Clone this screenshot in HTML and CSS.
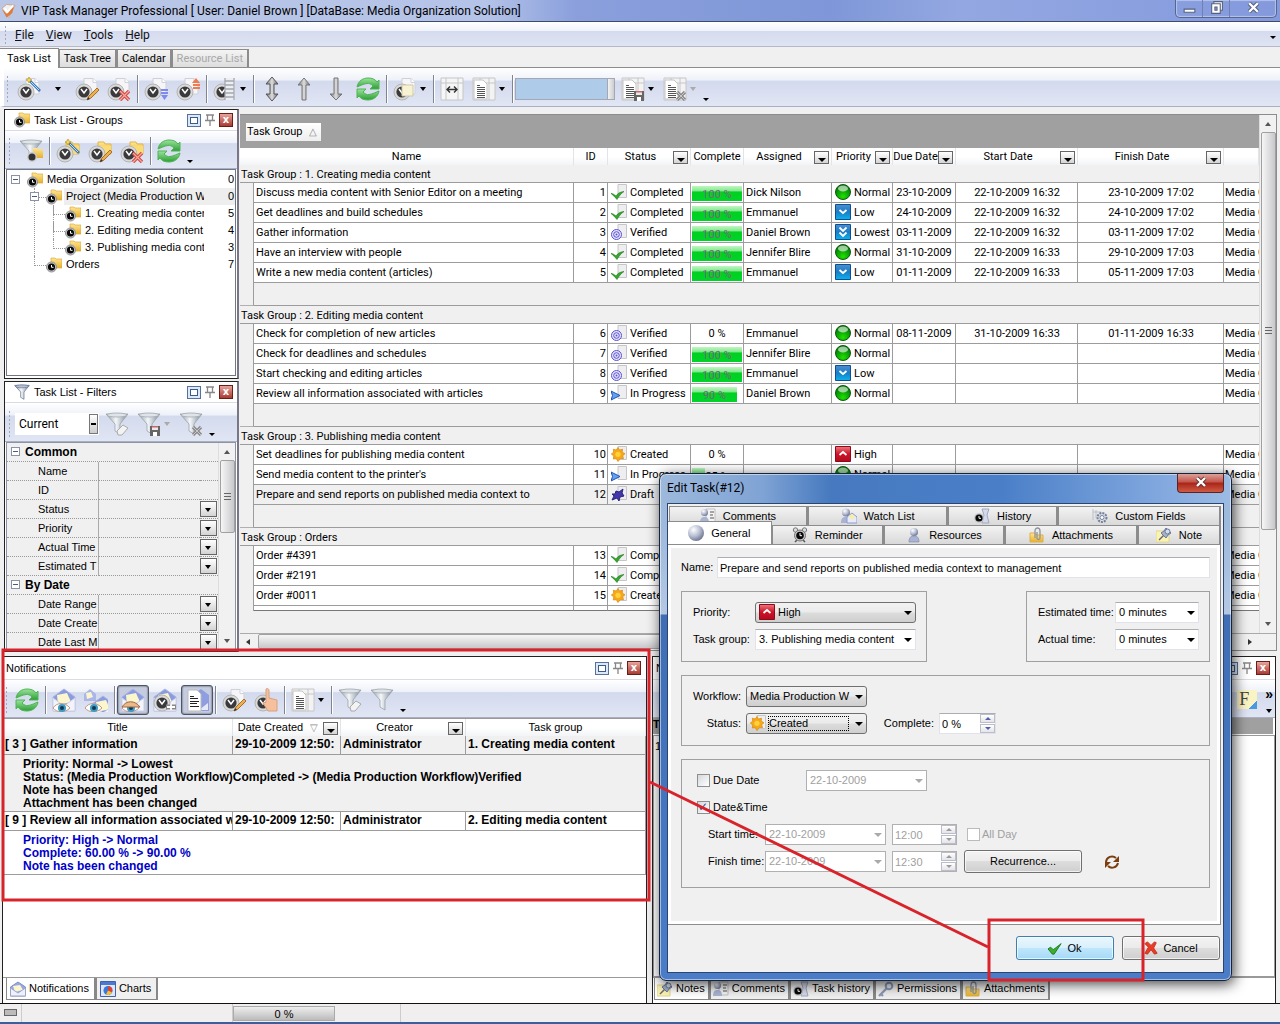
FILE: index.html
```html
<!DOCTYPE html>
<html lang="en">
<head>
<meta charset="utf-8">
<title>VIP Task Manager Professional</title>
<link rel="stylesheet" href="styles.css">
</head>
<body>
<svg class="defs" aria-hidden="true">
  <defs>
    <linearGradient id="g-green" x1="0" y1="0" x2="0" y2="1"><stop offset="0" stop-color="#9be49b"/><stop offset="1" stop-color="#2c9e34"/></linearGradient>
    <linearGradient id="g-steel" x1="0" y1="0" x2="1" y2="0"><stop offset="0" stop-color="#777"/><stop offset=".5" stop-color="#ddd"/><stop offset="1" stop-color="#666"/></linearGradient>
    <linearGradient id="g-yel" x1="0" y1="0" x2="0" y2="1"><stop offset="0" stop-color="#ffe694"/><stop offset="1" stop-color="#e6b02c"/></linearGradient>
    <linearGradient id="g-fun" x1="0" y1="0" x2="1" y2="0"><stop offset="0" stop-color="#8d98a2"/><stop offset=".45" stop-color="#f4f7fa"/><stop offset="1" stop-color="#7c8994"/></linearGradient>
    <linearGradient id="g-blue" x1="0" y1="0" x2="0" y2="1"><stop offset="0" stop-color="#4c8fd0"/><stop offset=".5" stop-color="#1c7cc4"/><stop offset="1" stop-color="#08b4ee"/></linearGradient>
    <linearGradient id="g-red" x1="0" y1="0" x2="0" y2="1"><stop offset="0" stop-color="#ee7a80"/><stop offset=".5" stop-color="#cc1428"/><stop offset="1" stop-color="#b40c20"/></linearGradient>
    <radialGradient id="g-ball" cx=".5" cy=".8" r=".8"><stop offset="0" stop-color="#20e000"/><stop offset=".6" stop-color="#079a07"/><stop offset="1" stop-color="#05600a"/></radialGradient>
    <radialGradient id="g-pearl" cx=".35" cy=".3" r=".8"><stop offset="0" stop-color="#fff"/><stop offset=".5" stop-color="#b8bfd4"/><stop offset="1" stop-color="#5f6780"/></radialGradient>
  </defs>
  <symbol id="ck" viewBox="0 0 24 24"><circle cx="9" cy="15" r="8" fill="#d9d9d9" stroke="#b4b4b4"/><circle cx="9" cy="15" r="5.600" fill="#3a3a3c"/><path d="M6 12l3 4 3-4" fill="none" stroke="#fff" stroke-width="1.500"/></symbol>
  <symbol id="pg" viewBox="0 0 24 24"><path d="M9 1.500h9l4 4V17H9z" fill="#f6f6f8" stroke="#cfd1d8"/><path d="M18 1.500v4h4" fill="#fff" stroke="#cfd1d8"/></symbol>
  <symbol id="fd" viewBox="0 0 24 24"><path d="M10 3h6l1 2h6v10H10z" fill="url(#g-yel)" stroke="#e0b648"/><path d="M12 7h11v8H12z" fill="#fbdc74"/></symbol>
  <symbol id="wand" viewBox="0 0 24 24"><path d="M13 4l10 10" stroke="#3f78bd" stroke-width="2.600"/><path d="M14 5l8 8" stroke="#b8dcf8" stroke-width="1"/><path d="M12 0l1 2 2 1-2 1-1 2-1-2-2-1 2-1z" fill="#f7d94c" stroke="#a88a20" stroke-width=".6"/></symbol>
  <symbol id="pencil" viewBox="0 0 24 24"><path d="M12 23l2-4 8-8 2 2-8 8z" fill="#eeb04c" stroke="#a8702c"/><path d="M12 23l1-3 2 2z" fill="#333"/></symbol>
  <symbol id="redx" viewBox="0 0 24 24"><path d="M13 14l9 9M22 14l-9 9" stroke="#d04a44" stroke-width="3.400"/><path d="M13 14l9 9M22 14l-9 9" stroke="#f9a89c" stroke-width="1.200"/></symbol>
  <symbol id="grayx" viewBox="0 0 24 24"><path d="M14 15l8 8M22 15l-8 8" stroke="#8c8c8c" stroke-width="3.200"/><path d="M14 15l8 8M22 15l-8 8" stroke="#c6c6c6" stroke-width="1"/></symbol>
  <symbol id="floppy" viewBox="0 0 24 24"><path d="M13 14h10v10H13z" fill="#666"/><path d="M15 14h6v4h-6z" fill="#e9e9e9"/><path d="M16 20h4v4h-4z" fill="#fff"/><path d="M15 14h6v1.500h-6z" fill="#c66"/></symbol>
  <symbol id="refresh" viewBox="0 0 24 24"><path d="M1 10C2 4 7 1 12 1c4 0 7 1 9 4l2-2v9h-9l3-3c-2-2-4-3-6-2.500C7 7 4 9 1 10z" fill="url(#g-green)" stroke="#4fb456"/><path d="M23 14c-1 6-6 9-11 9-4 0-7-1-9-4l-2 2v-9h9l-3 3c2 2 4 3 6 2.500 4-.5 7-2.500 10-3.500z" fill="url(#g-green)" stroke="#4fb456"/></symbol>
  <symbol id="funnel" viewBox="0 0 24 24"><path d="M1 2h22l-8 10v10l-5-3v-7z" fill="url(#g-fun)" stroke="#9aa3ab" stroke-width=".8"/><ellipse cx="12" cy="3" rx="10" ry="2" fill="#dfe4e8" stroke="#a1a9b0" stroke-width=".8"/></symbol>
  <symbol id="funnelb" viewBox="0 0 24 24"><path d="M1 2h22l-8 10v11l-5-3v-8z" fill="url(#g-fun)" stroke="#5d6c86"/><ellipse cx="12" cy="3.500" rx="10" ry="2.200" fill="#b4bfd4" stroke="#62708a"/></symbol>
  <symbol id="cols" viewBox="0 0 24 24"><path d="M1 1h22v22H1z" fill="#f3f3f3" stroke="#c6c6c6"/><path d="M1 6h22M8 1v5M17 1v22" stroke="#c6c6c6"/><path d="M2 3h9l4 4v15H2z" fill="#fff" stroke="#c4c4c4"/><path d="M5 8.500h3m-3 2h8m-8 2h8m-8 2h8m-8 2h8m-8 2h8m-8 2h8" stroke="#555"/></symbol>
  <symbol id="env" viewBox="0 0 24 24"><path d="M1 9l11-8 11 8v14H1z" fill="#8b9be0" stroke="#aab4e4"/><path d="M5 7l10-2 4 9-13 3z" fill="#fbf6cc"/><path d="M1 10l11 8 11-8v13H1z" fill="#f2f4fa" stroke="#cdd2e4"/></symbol>
  <symbol id="eye" viewBox="0 0 24 24"><path d="M1 20c4-6 12-6 17 0-5 5-13 5-17 0z" fill="#fff" stroke="#c49a84"/><circle cx="10" cy="20" r="4" fill="#3d9bc4"/><circle cx="10" cy="20" r="2" fill="#15384e"/></symbol>
  <symbol id="fclock" viewBox="0 0 16 16"><path d="M5 1h4l1 1h6v9H5z" fill="url(#g-yel)" stroke="#dba93a" stroke-width=".7"/><circle cx="5.500" cy="10" r="5" fill="#c4c4c8" stroke="#909094"/><circle cx="5.500" cy="10" r="3.600" fill="#080808"/><path d="M5.500 8v2.300h2" stroke="#fff" fill="none"/></symbol>
  <symbol id="sheet" viewBox="0 0 16 16"><path d="M7 .5h8.500v13H7z" fill="#eeeef0" stroke="#c6c6c8"/></symbol>
  <symbol id="s-done" viewBox="0 0 16 16"><use href="#sheet"/><path d="M0 9.500c2 0 3 1 5 2.500 2-3 4-4 8-4.500-3 2-5 4.500-7 8C4 13 2 11 0 9.500z" fill="#35a62e" stroke="#1e7a1b" stroke-width=".6"/></symbol>
  <symbol id="s-ver" viewBox="0 0 16 16"><use href="#sheet"/><circle cx="5.500" cy="10.500" r="5" fill="#e7e5ff" stroke="#5a50d0"/><circle cx="5.500" cy="10.500" r="2.800" fill="none" stroke="#5a50d0"/><circle cx="5.500" cy="10.500" r="1" fill="#5a50d0"/></symbol>
  <symbol id="s-prog" viewBox="0 0 16 16"><use href="#sheet"/><path d="M0 6l9 4.500L0 15l1.500-4.500z" fill="#5fa4ee" stroke="#2350b4"/></symbol>
  <symbol id="s-new" viewBox="0 0 16 16"><use href="#sheet"/><path d="M7 1.500l1.500 2.600 3-.9-.3 3 2.800 1.500-2.300 2 .8 3-3-.2L7 15.500l-1.700-2.800-3 .3.500-3L.3 8l2.400-1.800-.4-3 3 .8z" fill="#f7a818" stroke="#d98708" stroke-width=".7"/><circle cx="7" cy="8.300" r="2.600" fill="#ffd23c"/></symbol>
  <symbol id="s-draft" viewBox="0 0 16 16"><use href="#sheet"/><path d="M5 5l3 1 4-3-1 4 2 3-4 1-1 4-2-3-5 2 2-4-2-2 3 0z" fill="#4236a8" stroke="#2b2380"/></symbol>
  <symbol id="p-norm" viewBox="0 0 16 16"><circle cx="8" cy="8" r="7.500" fill="url(#g-ball)" stroke="#0a5c0c"/><ellipse cx="8" cy="4.500" rx="5" ry="3" fill="#fff" opacity=".6"/></symbol>
  <symbol id="p-low" viewBox="0 0 16 16"><path d="M.5.5h15v15H.5z" fill="url(#g-blue)" stroke="#0d4f92"/><path d="M4.500 6L8 9l3.500-3" fill="none" stroke="#fff" stroke-width="1.800"/></symbol>
  <symbol id="p-lowest" viewBox="0 0 16 16"><path d="M.5.5h15v15H.5z" fill="url(#g-blue)" stroke="#0d4f92"/><path d="M4.500 3.500L8 7l3.500-3.500M4.500 8.500L8 12l3.500-3.500" fill="none" stroke="#fff" stroke-width="1.800"/></symbol>
  <symbol id="p-high" viewBox="0 0 16 16"><path d="M.5.5h15v15H.5z" fill="url(#g-red)" stroke="#8e0a18"/><path d="M4.500 9L8 6l3.500 3" fill="none" stroke="#fff" stroke-width="1.800"/></symbol>
  <symbol id="person" viewBox="0 0 16 16"><path d="M3 15c0-5 2-6 5-6s5 1 5 6z" fill="#a9b4d2" stroke="#7c88ac" stroke-width=".6"/><circle cx="8" cy="5" r="4" fill="url(#g-pearl)"/></symbol>
  <symbol id="t-comm" viewBox="0 0 16 16"><path d="M6 1h9v13H6z" fill="#f4f4f6" stroke="#c0c0c4"/><path d="M10 4h4m-4 3h3m-3 3h4" stroke="#555"/><path d="M0 15c0-5 2-6 4.500-6S9 10 9 15z" fill="#a9b4d2"/><circle cx="4.500" cy="4.500" r="3.500" fill="url(#g-pearl)"/></symbol>
  <symbol id="t-watch" viewBox="0 0 16 16"><path d="M0 15c0-5 2-6 4.500-6S9 10 9 15z" fill="#a9b4d2"/><circle cx="5" cy="4.500" r="4" fill="url(#g-pearl)"/><path d="M6 9l5-4 5 4v6H6z" fill="#e6eafa" stroke="#8d9ad0"/><path d="M8 8l3-2 3 3-3 3z" fill="#f8ee9c"/></symbol>
  <symbol id="t-hist" viewBox="0 0 16 16"><path d="M8 1h7l-2 6 2 8H8l2-8z" fill="#d5daea" stroke="#a0a8c0"/><circle cx="5" cy="10" r="4.800" fill="#c4c4c8"/><circle cx="5" cy="10" r="3.600" fill="#080808"/><path d="M5 8v2.300h2" stroke="#fff" fill="none"/></symbol>
  <symbol id="gear" viewBox="0 0 16 16"><path d="M1 1v11M4 2v8M1 4h8" stroke="#b8c0c8" fill="none"/><circle cx="10" cy="9.500" r="4.500" fill="#d8dee8" stroke="#76809a" stroke-width="2" stroke-dasharray="2 1"/><circle cx="10" cy="9.500" r="2" fill="#fff" stroke="#76809a"/></symbol>
  <symbol id="alarm" viewBox="0 0 16 16"><circle cx="3.500" cy="3" r="2.200" fill="#ddd" stroke="#777"/><circle cx="12.500" cy="3" r="2.200" fill="#ddd" stroke="#777"/><path d="M3 15l2-2m8 2l-2-2" stroke="#555" stroke-width="1.500"/><circle cx="8" cy="8.500" r="5.500" fill="#c8c8c8" stroke="#777"/><circle cx="8" cy="8.500" r="3.800" fill="#0a0a0a"/><path d="M8 6v2.700h2" stroke="#fff" fill="none"/></symbol>
  <symbol id="clip" viewBox="0 0 16 16"><path d="M1 6h5l1 2h7v7H1z" fill="url(#g-yel)" stroke="#e0b048"/><path d="M6 11V4c0-4 5-4 5 0v7c0 2-3 2-3 0V5" fill="none" stroke="#8f959c" stroke-width="1.300"/></symbol>
  <symbol id="pin" viewBox="0 0 16 16"><path d="M0 4h13v11H0z" fill="#fbf3b4" stroke="#e0d68c"/><path d="M3 13l5-5" stroke="#667" stroke-width="1.400"/><path d="M5 6l5 5 2-3 3-2-5-5-2 3z" fill="#a3b1ca" stroke="#6a7a9c"/><circle cx="11.500" cy="4.500" r="2.500" fill="#d2dcec" stroke="#6a7a9c"/></symbol>
  <symbol id="key" viewBox="0 0 16 16"><path d="M1 15l8-8M3 13l2 2" stroke="#8c9ab4" stroke-width="2.400"/><circle cx="11" cy="5" r="3.300" fill="#e6ecf6" stroke="#8c9ab4" stroke-width="2"/></symbol>
  <symbol id="chart" viewBox="0 0 16 16"><path d="M.5.5h15v15H.5z" fill="#dfe6f6" stroke="#3d63b0"/><path d="M1 1h14v3H1z" fill="#4b7ad0"/><circle cx="8" cy="9.500" r="4.500" fill="#3b78d8"/><path d="M8 9.500V5a4.500 4.500 0 0 1 4 6.500z" fill="#e04030"/><path d="M8 9.500l4 2a4.500 4.500 0 0 1-6 2z" fill="#f2c230"/></symbol>
  <symbol id="envs" viewBox="0 0 16 16"><path d="M.5 6L8 1l7.500 5v9H.5z" fill="#9aa8e2" stroke="#7f8cc8"/><path d="M3 5l7-1 3 5-8 2z" fill="#fbf6cc"/><path d="M.5 7L8 12l7.500-5v8H.5z" fill="#eef1fa" stroke="#9ca6cc"/></symbol>
  <symbol id="pushpin" viewBox="0 0 12 12"><path d="M2 1h8M3.500 1v5M8.500 1v5M1 6.500h10M6 7v5" stroke="#888" fill="none" stroke-width="1.300"/></symbol>
  <symbol id="lad" viewBox="0 0 24 24"><path d="M12 1v22M21 1v22M12 4h9m-9 4h9m-9 4h9m-9 4h9m-9 4h9" stroke="#a4a8b0" stroke-width="1.300" fill="none"/></symbol>
</svg>

<div class="app">
  <header class="titlebar">
    <svg class="logo" viewBox="0 0 16 16"><path d="M1 5l5-4 9 1-7 13z" fill="#f0f0f0" stroke="#c9a58a"/><path d="M1 6l5 5 8-9-2 8-6 5z" fill="#e0793a"/><path d="M4 5l3 4 6-7" fill="none" stroke="#fff" stroke-width="2"/></svg>
    <h1>VIP Task Manager Professional [ User: Daniel Brown ] [DataBase: Media Organization Solution]</h1>
    <div class="winbtns">
      <button aria-label="Minimize"><svg viewBox="0 0 14 12"><path d="M2 7.500h10v3H2z" fill="#fff" stroke="#55607c"/></svg></button>
      <button aria-label="Restore"><svg viewBox="0 0 14 12"><path d="M4.500.5h8v8h-8z" fill="#fff" stroke="#55607c"/><path d="M2.500 2.500h8v9h-8z" fill="#fff" stroke="#55607c"/><path d="M5.500 5.500h2v3h-2z" fill="#8fa4dc" stroke="#55607c"/></svg></button>
      <button class="wide" aria-label="Close"><svg viewBox="0 0 14 12"><path d="M3 2l8 8M11 2l-8 8" stroke="#55607c" stroke-width="4"/><path d="M3 2l8 8M11 2l-8 8" stroke="#fff" stroke-width="2.200"/></svg></button>
    </div>
  </header>

  <nav class="menubar">
    <span class="grip"></span>
    <a href="#file"><u>F</u>ile</a><a href="#view"><u>V</u>iew</a><a href="#tools"><u>T</u>ools</a><a href="#help"><u>H</u>elp</a>
    <span class="tri end"></span>
  </nav>

  <div class="viewtabs" role="tablist">
    <button role="tab" class="on" aria-selected="true">Task List</button><button role="tab">Task Tree</button><button role="tab">Calendar</button><button role="tab" disabled>Resource List</button>
  </div>

  <div class="toolbar main-tools">
    <span class="grip"></span>
    <button aria-label="New task"><svg viewBox="0 0 24 24"><use href="#pg"/><use href="#ck"/><use href="#wand"/></svg></button>
    <button class="drop wide" aria-label="New task options"><span class="tri"></span></button>
    <button aria-label="Edit task"><svg viewBox="0 0 24 24"><use href="#pg"/><use href="#ck"/><use href="#pencil"/></svg></button>
    <button aria-label="Delete task"><svg viewBox="0 0 24 24"><use href="#pg"/><use href="#ck"/><use href="#redx"/></svg></button>
    <span class="sep"></span>
    <button aria-label="Move down"><svg viewBox="0 0 24 24"><use href="#pg"/><use href="#ck"/><path d="M17 12h7v2h-7zm0 3h7v2h-7zm0 3h7l-3.500 5z" fill="#7d8af0"/></svg></button>
    <button aria-label="Move up"><svg viewBox="0 0 24 24"><use href="#pg"/><use href="#ck"/><path d="M17 12h7v-2h-7zm0-3h7V7h-7zm-1-3h8l-4-5z" fill="#ee7c50"/></svg></button>
    <span class="sep"></span>
    <button class="has-drop" aria-label="Stages"><svg viewBox="0 0 24 24"><use href="#ck"/><path d="M12 1h10v22H12z" fill="#eceef2"/><use href="#lad"/></svg></button>
    <button class="drop" aria-label="Stage options"><span class="tri"></span></button>
    <span class="sep"></span>
    <button aria-label="Expand all"><svg viewBox="0 0 24 24"><path d="M12 0l6 7h-4v10h4l-6 7-6-7h4V7H6z" fill="url(#g-steel)" stroke="#555"/></svg></button>
    <button aria-label="Up"><svg viewBox="0 0 24 24"><path d="M12 1l6 7h-4v15h-4V8H6z" fill="url(#g-steel)" stroke="#777"/></svg></button>
    <button aria-label="Down"><svg viewBox="0 0 24 24"><path d="M12 23l6-6h-4V1h-4v16H6z" fill="url(#g-steel)" stroke="#777"/></svg></button>
    <button aria-label="Refresh"><svg viewBox="0 0 24 24"><use href="#refresh"/></svg></button>
    <span class="sep"></span>
    <button class="has-drop" aria-label="Templates"><svg viewBox="0 0 24 24"><use href="#pg"/><use href="#ck"/><path d="M9 8h11v11H9z" fill="#f8f2d4" stroke="#cfc8a8"/></svg></button>
    <button class="drop" aria-label="Template options"><span class="tri"></span></button>
    <span class="sep"></span>
    <button aria-label="Fit columns"><svg viewBox="0 0 24 24"><path d="M1 1h22v22H1z" fill="#f6f6f6" stroke="#c6c6c6"/><path d="M1 6h22M6 1v22M18 1v22" stroke="#c6c6c6"/><path d="M7 9h10v7H7z" fill="#f6f6f6"/><path d="M7 12.500h10M10 9.500l-3 3 3 3M14 9.500l3 3-3 3" fill="none" stroke="#333" stroke-width="1.400"/></svg></button>
    <button class="has-drop" aria-label="Columns"><svg viewBox="0 0 24 24"><use href="#cols"/></svg></button>
    <button class="drop" aria-label="Column options"><span class="tri"></span></button>
    <span class="sep"></span>
    <span class="viewbox"><select aria-label="Saved view"><option></option></select></span>
    <button class="has-drop" aria-label="Save view"><svg viewBox="0 0 24 24"><use href="#cols"/><use href="#floppy"/></svg></button>
    <button class="drop" aria-label="Save options"><span class="tri"></span></button>
    <button class="has-drop" aria-label="Delete view"><svg viewBox="0 0 24 24"><use href="#cols"/><use href="#grayx"/></svg></button>
    <button class="drop" aria-label="Delete options"><span class="tri dim"></span></button>
    <span class="tri more"></span>
  </div>

  <main class="work">
    <div class="side">
      <section class="panel">
        <header class="phead"><svg class="i16"><use href="#fclock"/></svg><h2>Task List - Groups</h2>
          <button class="pb" aria-label="Maximize"></button><button class="pp" aria-label="Pin"><svg><use href="#pushpin"/></svg></button><button class="px" aria-label="Close">x</button></header>
        <div class="toolbar">
          <span class="grip"></span>
          <button aria-label="Filter by group"><svg viewBox="0 0 24 24"><use href="#funnel"/><path d="M14 9h4l1 1h5v9H14z" fill="url(#g-yel)"/><circle cx="13" cy="18" r="5" fill="#ccc"/><circle cx="13" cy="18" r="3.500" fill="#333"/></svg></button>
          <span class="sep"></span>
          <button aria-label="New group"><svg viewBox="0 0 24 24"><use href="#fd"/><use href="#ck"/><use href="#wand"/></svg></button>
          <button aria-label="Edit group"><svg viewBox="0 0 24 24"><use href="#fd"/><use href="#ck"/><use href="#pencil"/></svg></button>
          <button aria-label="Delete group"><svg viewBox="0 0 24 24"><use href="#fd"/><use href="#ck"/><use href="#redx"/></svg></button>
          <span class="sep"></span>
          <button aria-label="Refresh groups"><svg viewBox="0 0 24 24"><use href="#refresh"/></svg></button>
          <span class="tri more"></span>
        </div>
        <ul class="tree">
          <li><div class="node"><span class="tog"><i class="minus"></i></span><svg class="i16"><use href="#fclock"/></svg><span class="lbl">Media Organization Solution</span><span>0</span></div>
            <ul>
              <li><div class="node"><span class="tog"><i class="minus"></i></span><svg class="i16"><use href="#fclock"/></svg><span class="lbl sel">Project (Media Production Wo</span><span class="sel">0</span></div>
                <ul>
                  <li><div class="node"><span class="tog"></span><svg class="i16"><use href="#fclock"/></svg><span class="lbl">1. Creating media conten</span><span>5</span></div></li>
                  <li><div class="node"><span class="tog"></span><svg class="i16"><use href="#fclock"/></svg><span class="lbl">2. Editing media content</span><span>4</span></div></li>
                  <li><div class="node"><span class="tog"></span><svg class="i16"><use href="#fclock"/></svg><span class="lbl">3. Publishing media conte</span><span>3</span></div></li>
                </ul></li>
              <li><div class="node"><span class="tog"></span><svg class="i16"><use href="#fclock"/></svg><span class="lbl">Orders</span><span>7</span></div></li>
            </ul></li>
        </ul>
      </section>

      <section class="panel">
        <header class="phead"><svg class="i16" viewBox="0 0 24 24"><use href="#funnelb"/></svg><h2>Task List - Filters</h2>
          <button class="pb" aria-label="Maximize"></button><button class="pp" aria-label="Pin"><svg><use href="#pushpin"/></svg></button><button class="px" aria-label="Close">x</button></header>
        <div class="toolbar filter-tools">
          <span class="grip"></span>
          <span class="viewbox current"><select aria-label="Filter"><option>Current</option></select></span>
          <button aria-label="Clear filter"><svg viewBox="0 0 24 24"><use href="#funnel"/><path d="M12 19l6-6 5 3-6 7h-4z" fill="#f3f3f3" stroke="#aaa"/></svg></button>
          <button class="has-drop" aria-label="Save filter"><svg viewBox="0 0 24 24"><use href="#funnel"/><use href="#floppy"/></svg></button>
          <button class="drop" aria-label="Save filter options"><span class="tri dim"></span></button>
          <button aria-label="Delete filter"><svg viewBox="0 0 24 24"><use href="#funnel"/><use href="#grayx"/></svg></button>
          <span class="tri more"></span>
        </div>
        <div class="filters">
          <table>
            <colgroup><col class="f-name"><col><col class="f-btn"></colgroup>
            <tr><th colspan="3"><i class="minus"></i>Common</th></tr>
            <tr><td>Name</td><td></td><td></td></tr>
            <tr><td>ID</td><td></td><td></td></tr>
            <tr><td>Status</td><td></td><td><button class="dd" aria-label="Status"></button></td></tr>
            <tr><td>Priority</td><td></td><td><button class="dd" aria-label="Priority"></button></td></tr>
            <tr><td>Actual Time</td><td></td><td><button class="dd" aria-label="Actual Time"></button></td></tr>
            <tr><td>Estimated T</td><td></td><td><button class="dd" aria-label="Estimated Time"></button></td></tr>
            <tr><th colspan="3"><i class="minus"></i>By Date</th></tr>
            <tr><td>Date Range</td><td></td><td><button class="dd" aria-label="Date Range"></button></td></tr>
            <tr><td>Date Create</td><td></td><td><button class="dd" aria-label="Date Created"></button></td></tr>
            <tr><td>Date Last M</td><td></td><td><button class="dd" aria-label="Date Last Modified"></button></td></tr>
          </table>
          <div class="vbar"><b class="up"></b><i class="thumb short"></i><b class="down"></b></div>
        </div>
      </section>
    </div>

    <section class="grid">
      <div class="gridmain">
        <div class="gridbody">
          <div class="groupby"><span>Task Group <em>△</em></span></div>
          <table class="tasks">
            <colgroup><col class="c0"><col class="c1"><col class="c2"><col class="c3"><col class="c4"><col class="c5"><col class="c6"><col class="c7"><col class="c8"><col class="c9"><col></colgroup>
            <thead><tr><th colspan="2">Name</th><th>ID</th><th class="m">Status<button class="dd" aria-label="Filter Status"></button></th><th>Complete</th><th class="m">Assigned<button class="dd" aria-label="Filter Assigned"></button></th><th class="m">Priority<button class="dd" aria-label="Filter Priority"></button></th><th class="m">Due Date<button class="dd" aria-label="Filter Due Date"></button></th><th class="m">Start Date<button class="dd" aria-label="Filter Start Date"></button></th><th class="m">Finish Date<button class="dd" aria-label="Filter Finish Date"></button></th><th></th></tr></thead>
            <tbody>
              <tr class="g"><td colspan="11">Task Group : 1. Creating media content</td></tr>
              <tr><td></td><td>Discuss media content with Senior Editor on a meeting</td><td>1</td><td><svg class="i16"><use href="#s-done"/></svg>Completed</td><td><span class="bar" style="width:100%">100 %</span></td><td>Dick Nilson</td><td><svg class="i16"><use href="#p-norm"/></svg>Normal</td><td>23-10-2009</td><td>22-10-2009 16:32</td><td>23-10-2009 17:02</td><td>Media O</td></tr>
              <tr><td></td><td>Get deadlines and build schedules</td><td>2</td><td><svg class="i16"><use href="#s-done"/></svg>Completed</td><td><span class="bar" style="width:100%">100 %</span></td><td>Emmanuel</td><td><svg class="i16"><use href="#p-low"/></svg>Low</td><td>24-10-2009</td><td>22-10-2009 16:32</td><td>24-10-2009 17:02</td><td>Media O</td></tr>
              <tr><td></td><td>Gather information</td><td>3</td><td><svg class="i16"><use href="#s-ver"/></svg>Verified</td><td><span class="bar" style="width:100%">100 %</span></td><td>Daniel Brown</td><td><svg class="i16"><use href="#p-lowest"/></svg>Lowest</td><td>03-11-2009</td><td>22-10-2009 16:32</td><td>03-11-2009 17:02</td><td>Media O</td></tr>
              <tr><td></td><td>Have an interview with people</td><td>4</td><td><svg class="i16"><use href="#s-done"/></svg>Completed</td><td><span class="bar" style="width:100%">100 %</span></td><td>Jennifer Blire</td><td><svg class="i16"><use href="#p-norm"/></svg>Normal</td><td>31-10-2009</td><td>22-10-2009 16:33</td><td>29-10-2009 17:03</td><td>Media O</td></tr>
              <tr><td></td><td>Write a new media content (articles)</td><td>5</td><td><svg class="i16"><use href="#s-done"/></svg>Completed</td><td><span class="bar" style="width:100%">100 %</span></td><td>Emmanuel</td><td><svg class="i16"><use href="#p-low"/></svg>Low</td><td>01-11-2009</td><td>22-10-2009 16:33</td><td>05-11-2009 17:03</td><td>Media O</td></tr>
              <tr class="f"><td></td><td colspan="10"></td></tr>
            </tbody>
            <tbody>
              <tr class="g"><td colspan="11">Task Group : 2. Editing media content</td></tr>
              <tr><td></td><td>Check for completion of new articles</td><td>6</td><td><svg class="i16"><use href="#s-ver"/></svg>Verified</td><td>0 %</td><td>Emmanuel</td><td><svg class="i16"><use href="#p-norm"/></svg>Normal</td><td>08-11-2009</td><td>31-10-2009 16:33</td><td>01-11-2009 16:33</td><td>Media O</td></tr>
              <tr><td></td><td>Check for deadlines and schedules</td><td>7</td><td><svg class="i16"><use href="#s-ver"/></svg>Verified</td><td><span class="bar" style="width:100%">100 %</span></td><td>Jennifer Blire</td><td><svg class="i16"><use href="#p-norm"/></svg>Normal</td><td></td><td></td><td></td><td>Media O</td></tr>
              <tr><td></td><td>Start checking and editing articles</td><td>8</td><td><svg class="i16"><use href="#s-ver"/></svg>Verified</td><td><span class="bar" style="width:100%">100 %</span></td><td>Emmanuel</td><td><svg class="i16"><use href="#p-low"/></svg>Low</td><td></td><td></td><td></td><td>Media O</td></tr>
              <tr><td></td><td>Review all information associated with articles</td><td>9</td><td><svg class="i16"><use href="#s-prog"/></svg>In Progress</td><td><span class="bar" style="width:90%">90 %</span></td><td>Daniel Brown</td><td><svg class="i16"><use href="#p-norm"/></svg>Normal</td><td></td><td></td><td></td><td>Media O</td></tr>
              <tr class="f"><td></td><td colspan="10"></td></tr>
            </tbody>
            <tbody>
              <tr class="g"><td colspan="11">Task Group : 3. Publishing media content</td></tr>
              <tr><td></td><td>Set deadlines for publishing media content</td><td>10</td><td><svg class="i16"><use href="#s-new"/></svg>Created</td><td>0 %</td><td></td><td><svg class="i16"><use href="#p-high"/></svg>High</td><td></td><td></td><td></td><td>Media O</td></tr>
              <tr><td></td><td>Send media content to the printer's</td><td>11</td><td><svg class="i16"><use href="#s-prog"/></svg>In Progress</td><td><div class="low">25 %</div></td><td></td><td><svg class="i16"><use href="#p-norm"/></svg>Normal</td><td></td><td></td><td></td><td>Media O</td></tr>
              <tr class="cur"><td></td><td>Prepare and send reports on published media context to</td><td>12</td><td><svg class="i16"><use href="#s-draft"/></svg>Draft</td><td></td><td></td><td></td><td></td><td></td><td></td><td>Media O</td></tr>
              <tr class="f"><td></td><td colspan="10"></td></tr>
            </tbody>
            <tbody>
              <tr class="g"><td colspan="11">Task Group : Orders</td></tr>
              <tr><td></td><td>Order #4391</td><td>13</td><td><svg class="i16"><use href="#s-done"/></svg>Completed</td><td></td><td></td><td></td><td></td><td></td><td></td><td>Media O</td></tr>
              <tr><td></td><td>Order #2191</td><td>14</td><td><svg class="i16"><use href="#s-done"/></svg>Completed</td><td></td><td></td><td></td><td></td><td></td><td></td><td>Media O</td></tr>
              <tr><td></td><td>Order #0011</td><td>15</td><td><svg class="i16"><use href="#s-new"/></svg>Created</td><td></td><td></td><td></td><td></td><td></td><td></td><td>Media O</td></tr>
              <tr class="part"><td></td><td></td><td></td><td></td><td></td><td></td><td></td><td></td><td></td><td></td><td></td></tr>
            </tbody>
          </table>
        </div>
        <div class="vbar"><b class="up"></b><i class="thumb"></i><b class="down"></b></div>
      </div>
      <div class="hbar"><b class="to-left"></b><i class="thumb"></i><b class="to-right"></b></div>
    </section>
  </main>

  <div class="dock">
    <section class="pane notes-pane">
      <header class="phead"><h2>Notifications</h2><button class="pb" aria-label="Maximize"></button><button class="pp" aria-label="Pin"><svg><use href="#pushpin"/></svg></button><button class="px" aria-label="Close">x</button></header>
      <div class="toolbar">
        <span class="grip"></span>
        <button aria-label="Refresh notifications"><svg viewBox="0 0 24 24"><use href="#refresh"/></svg></button>
        <span class="sep"></span>
        <button aria-label="Mark read"><svg viewBox="0 0 24 24"><use href="#env"/><use href="#eye"/></svg></button>
        <button aria-label="Mark all read"><svg viewBox="0 0 24 24"><path d="M0 6l6-5 6 5v7H0z" fill="#aab6ea"/><path d="M2 5l5-1 2 5-6 2z" fill="#fbf6cc"/><svg x="7" y="7" width="17" height="16"><use href="#env"/></svg><use href="#eye"/></svg></button>
        <span class="sep"></span>
        <button class="down" aria-label="Show unread"><svg viewBox="0 0 24 24"><use href="#env"/><use href="#eye"/><path d="M1 19c4-7 13-7 18 0z" fill="#eeb98a" stroke="#a06a48"/></svg></button>
        <button aria-label="Open task"><svg viewBox="0 0 24 24"><use href="#env"/><use href="#ck"/><path d="M13 19h4m2 0h4" stroke="#888" stroke-width="5"/><path d="M14 19h8" stroke="#fff" stroke-width="2"/></svg></button>
        <button class="down" aria-label="Show details"><svg viewBox="0 0 24 24"><path d="M10 5l6-4 8 6v16H10z" fill="#8f9ee0"/><path d="M14 22l9-7v7z" fill="#e6eaf8"/><path d="M3 2h9l4 4v17H3z" fill="#fff" stroke="#bbb"/><path d="M5 8.500h4m-4 2h8m-8 3h9m-9 2h7m-7 3h9" stroke="#222"/></svg></button>
        <span class="sep"></span>
        <button aria-label="Edit"><svg viewBox="0 0 24 24"><use href="#pg"/><use href="#ck"/><use href="#pencil"/></svg></button>
        <button aria-label="Go to task"><svg viewBox="0 0 24 24"><use href="#ck"/><path d="M12 1c2-1 3 0 3 2v7l8 2v11h-9l-5-8 3-1z" fill="#f6c09c" stroke="#d8a080"/></svg></button>
        <span class="sep"></span>
        <button class="has-drop" aria-label="Columns"><svg viewBox="0 0 24 24"><use href="#cols"/></svg></button>
        <button class="drop" aria-label="Column options"><span class="tri"></span></button>
        <span class="sep"></span>
        <button aria-label="Clear filter"><svg viewBox="0 0 24 24"><use href="#funnel"/><path d="M12 19l6-6 5 3-6 7h-4z" fill="#f3f3f3" stroke="#aaa"/></svg></button>
        <button aria-label="Filter"><svg viewBox="0 0 24 24"><use href="#funnel"/></svg></button>
        <span class="tri more"></span>
      </div>
      <div class="pane-body">
        <table class="notif">
          <colgroup><col class="n1"><col class="n2"><col class="n3"><col></colgroup>
          <thead><tr><th>Title</th><th class="m">Date Created <em>▽</em><button class="dd" aria-label="Filter Date Created"></button></th><th class="m">Creator<button class="dd" aria-label="Filter Creator"></button></th><th>Task group</th></tr></thead>
          <tbody>
            <tr class="shade"><td>[ 3 ] Gather information</td><td>29-10-2009 12:50:</td><td>Administrator</td><td>1. Creating media content</td></tr>
            <tr class="shade memo"><td colspan="4">Priority: Normal -&gt; Lowest<br>Status: (Media Production Workflow)Completed -&gt; (Media Production Workflow)Verified<br>Note has been changed<br>Attachment has been changed</td></tr>
            <tr><td>[ 9 ] Review all information associated w</td><td>29-10-2009 12:50:</td><td>Administrator</td><td>2. Editing media content</td></tr>
            <tr class="memo blue"><td colspan="4">Priority: High -&gt; Normal<br>Complete: 60.00 % -&gt; 90.00 %<br>Note has been changed</td></tr>
          </tbody>
        </table>
      </div>
      <div class="btabs" role="tablist"><button role="tab" class="on"><svg class="i16"><use href="#envs"/></svg>Notifications</button><button role="tab"><svg class="i16"><use href="#chart"/></svg>Charts</button></div>
    </section>

    <section class="pane info-pane">
      <header class="phead"><h2>Notes</h2><button class="pb" aria-label="Maximize"></button><button class="pp" aria-label="Pin"><svg><use href="#pushpin"/></svg></button><button class="px" aria-label="Close">x</button></header>
      <div class="toolbar endtools"><span class="fontbtn">F</span><span class="chev">»<span class="tri"></span></span></div>
      <div class="graybar">T</div>
      <div class="pane-body paper">1</div>
      <div class="btabs" role="tablist"><button role="tab" class="on"><svg class="i16"><use href="#pin"/></svg>Notes</button><button role="tab"><svg class="i16"><use href="#t-comm"/></svg>Comments</button><button role="tab"><svg class="i16"><use href="#t-hist"/></svg>Task history</button><button role="tab"><svg class="i16"><use href="#key"/></svg>Permissions</button><button role="tab"><svg class="i16"><use href="#clip"/></svg>Attachments</button></div>
    </section>
  </div>

  <footer class="statusbar"><span class="cell disk"><i></i></span><span class="cell gap"></span><span class="prog">0 %</span><span class="cell gap2"></span></footer>
</div>

<div class="dialog" role="dialog" aria-labelledby="dlg-title">
  <header><h2 id="dlg-title">Edit Task(#12)</h2><button class="dlg-x" aria-label="Close"><svg viewBox="0 0 14 12"><path d="M3 2l8 8M11 2l-8 8" stroke="#62302c" stroke-width="4"/><path d="M3 2l8 8M11 2l-8 8" stroke="#fff" stroke-width="2.400"/></svg></button></header>
  <form class="client">
    <div class="dtabs back" role="tablist">
      <button type="button" role="tab" class="w1"><svg class="i16"><use href="#t-comm"/></svg>Comments</button><button type="button" role="tab" class="w2"><svg class="i16"><use href="#t-watch"/></svg>Watch List</button><button type="button" role="tab" class="w3"><svg class="i16"><use href="#t-hist"/></svg>History</button><button type="button" role="tab" class="w4"><svg class="i16"><use href="#gear"/></svg>Custom Fields</button>
    </div>
    <div class="dtabs front" role="tablist">
      <button type="button" role="tab" class="on v1"><svg class="i16" viewBox="0 0 16 16"><circle cx="8" cy="8" r="8" fill="url(#g-pearl)"/></svg>General</button><button type="button" role="tab" class="v2"><svg class="i16"><use href="#alarm"/></svg>Reminder</button><button type="button" role="tab" class="v3"><svg class="i16"><use href="#person"/></svg>Resources</button><button type="button" role="tab" class="v4"><svg class="i16"><use href="#clip"/></svg>Attachments</button><button type="button" role="tab" class="v5"><svg class="i16"><use href="#pin"/></svg>Note</button>
    </div>
    <div class="page">
      <div class="line name"><label for="nm">Name:</label><input id="nm" type="text" value="Prepare and send reports on published media context to management"></div>
      <div class="boxes">
        <div class="box two prio">
          <label for="pr">Priority:</label><span class="combo raised icon"><svg class="i16"><use href="#p-high"/></svg><select id="pr"><option>High</option></select></span>
          <label for="tg">Task group:</label><span class="combo"><select id="tg"><option>3. Publishing media content</option></select></span>
        </div>
        <div class="box two times">
          <label for="et">Estimated time:</label><span class="combo"><select id="et"><option>0 minutes</option></select></span>
          <label for="at">Actual time:</label><span class="combo"><select id="at"><option>0 minutes</option></select></span>
        </div>
      </div>
      <div class="box flowbox">
        <label for="wf">Workflow:</label><span class="combo raised"><select id="wf"><option>Media Production W</option></select></span><span></span><span></span>
        <label for="st">Status:</label><span class="combo raised icon focus"><svg class="i16"><use href="#s-new"/></svg><select id="st"><option>Created</option></select></span>
        <label for="cp">Complete:</label><span class="spin"><input id="cp" type="text" value="0 %"><i><b class="su"></b><b class="sd"></b></i></span>
      </div>
      <div class="box dates">
        <div class="line"><input type="checkbox" id="dd"><label for="dd" class="dd-l">Due Date</label><span class="combo off"><select disabled aria-label="Due date"><option>22-10-2009</option></select></span></div>
        <div class="line"><input type="checkbox" id="dt" checked><label for="dt">Date&amp;Time</label></div>
        <div class="line"><label for="sd" class="tl">Start time:</label><span class="combo off"><select id="sd" disabled><option>22-10-2009</option></select></span><span class="spin off"><input type="text" value="12:00" disabled aria-label="Start hour"><i><b class="su"></b><b class="sd"></b></i></span><input type="checkbox" id="ad" class="adc" disabled><label for="ad" class="dim">All Day</label></div>
        <div class="line"><label for="fdt" class="tl">Finish time:</label><span class="combo off"><select id="fdt" disabled><option>22-10-2009</option></select></span><span class="spin off"><input type="text" value="12:30" disabled aria-label="Finish hour"><i><b class="su"></b><b class="sd"></b></i></span><button type="button" class="push">Recurrence...</button><svg class="i16 rec" viewBox="0 0 16 16"><path d="M2 8a6 6 0 0 1 10-4" fill="none" stroke="#7a3e10" stroke-width="2"/><path d="M15 2v6H9z" fill="#7a3e10"/><path d="M14 9a6 6 0 0 1-10 3" fill="none" stroke="#7a3e10" stroke-width="2"/><path d="M1 14V8h6z" fill="#7a3e10"/></svg></div>
      </div>
    </div>
    <div class="actions">
      <button type="button" class="push ok"><svg class="i14" viewBox="0 0 16 16"><path d="M0 9l3-2 3 3 9-7-8 12H5z" fill="#3cb02c" stroke="#1d7414"/></svg>Ok</button>
      <button type="button" class="push"><svg class="i14" viewBox="0 0 16 16"><path d="M1 3l3-2 4 4 4-4 2 1-3 6 4 6-3 1-4-5-4 5-3-1 4-7z" fill="#ea3c24" stroke="#c0301c"/></svg>Cancel</button>
    </div>
  </form>
</div>

<svg class="marks" viewBox="0 0 1280 1024" aria-hidden="true"><g fill="none" stroke="#d8232a" stroke-width="3"><path d="M3 650h646v250H3z"/><path d="M650 782l338 165"/><path d="M989 920h154v60H989z"/></g></svg>
</body>
</html>
```
FILE: styles.css
```css
* { box-sizing: border-box; }
body { margin: 0; font: 11px/13px "Liberation Sans", Arial, sans-serif; color: #000; background: #f0f0f0; overflow: hidden; }
button, input, select { font: inherit; color: inherit; margin: 0; }
button { padding: 0; border: 0; background: none; }
h1, h2 { margin: 0; font-size: inherit; font-weight: normal; }
.defs { position: absolute; width: 0; height: 0; }
.i16 { width: 16px; height: 16px; flex: none; }
.i14 { width: 14px; height: 14px; flex: none; }
.app { height: 100vh; display: flex; flex-direction: column; }

/* title bar and menu */
.titlebar { flex: none; height: 22px; display: flex; align-items: center; gap: 5px; padding-left: 1px; background: linear-gradient(90deg, #b9c6e6 0, #b4c3e8 38%, #8a9fdc 45%, #7f97d8 65%, #93a8e2 75%, #8399dc 100%); border-bottom: 1px solid #3f4a68; }
.titlebar h1 { flex: 1; font: 12px/20px Roboto, sans-serif; white-space: nowrap; }
.logo { width: 15px; height: 16px; }
.winbtns { align-self: flex-start; height: 18px; display: flex; margin-right: 3px; border: 1px solid #55668f; border-top: 0; border-radius: 0 0 5px 5px; box-shadow: inset 0 0 1px 1px rgba(255,255,255,.4); }
.winbtns button { width: 27px; border-right: 1px solid #6f80b2; }
.winbtns .wide { width: 46px; border: 0; }
.winbtns svg { width: 15px; height: 13px; }
.menubar { flex: none; height: 25px; display: flex; align-items: center; padding: 1px 0 0 4px; background: linear-gradient(#fff, #f0f3fa 36%, #d5dbee 38%, #dfe4f3); border-bottom: 1px solid #b4b8c8; font: 12px/16px Roboto, sans-serif; }
.menubar a { color: #111; text-decoration: none; margin-right: 12px; }
.menubar .grip { margin-right: 8px; }
.menubar .end { margin: 6px 4px 0 auto; border-width: 3px; border-bottom: 0; }
.grip { flex: none; width: 3px; height: 28px; background: radial-gradient(circle, #a3a9bb 1px, transparent 1px) 0 0 / 3px 4px; }
.menubar .grip { height: 20px; }
.tri { width: 0; height: 0; border: 3px solid transparent; border-top: 4px solid #000; border-bottom: 0; flex: none; }
.tri.dim { border-top-color: #aaa; }
.tri.more { align-self: flex-end; margin: 0 0 5px 2px; border-width: 3px; border-bottom: 0; }

.viewtabs { flex: none; height: 21px; display: flex; align-items: flex-end; background: #f0f0f0; border-bottom: 1px solid #8c8c8c; }
.viewtabs button { height: 18px; padding: 0 4px; border: 1px solid #8c8c8c; border-width: 1px 2px 0 1px; background: linear-gradient(#f4f4f4, #ddd); font: 11px/16px Roboto, sans-serif; }
.viewtabs .on { height: 20px; margin-bottom: -1px; padding: 0 7px; background: #fff; border-left: 0; border-right-width: 1px; }
.viewtabs button:disabled { color: #a8a8a8; }

/* toolbars */
.toolbar { flex: none; height: 38px; display: flex; align-items: center; padding: 3px 0 0 3px; background: linear-gradient(#fff, #eef1f9 32%, #d3daed 34%, #e1e6f4); border-bottom: 1px solid #a9b0c4; overflow: hidden; }
.toolbar .grip { margin-right: 4px; }
.toolbar button { width: 32px; height: 32px; display: flex; align-items: center; justify-content: center; flex: none; }
.toolbar button svg { width: 24px; height: 24px; }
.toolbar .has-drop { width: 31px; }
.toolbar .drop { width: 11px; justify-content: flex-start; }
.toolbar .drop.wide { width: 26px; justify-content: center; }
.toolbar .down { border: 1px solid #4e5464; border-radius: 3px; background: #c5cce0; box-shadow: inset 0 0 2px #333; height: 30px; }
.filter-tools { height: 39px; }
.sep { flex: none; width: 1px; height: 28px; background: #7f8490; margin: 0 2px; border: 0; }
.main-tools { height: 39px; margin-bottom: 1px; padding: 4px 0 0 2px; border-left: 4px solid #fff; }
.toolbar .sep { box-shadow: 1px 0 #fff; }
.viewbox { flex: none; width: 100px; height: 22px; margin: 0 2px 0 0; border: 1px solid #a3a8b4; background: #aecbe9; position: relative; }
.viewbox::after { content: ""; position: absolute; right: 0; top: 0; bottom: 0; width: 6px; background: linear-gradient(90deg, #f3f3f3, #ccc); border-left: 1px solid #a3a8b4; }
.viewbox select { appearance: none; width: 100%; height: 20px; border: 0; background: none; padding: 0 3px; }
.viewbox.current { width: 84px; background: #fff; border-color: #fff; font: 12px/14px Roboto, sans-serif; margin-right: 2px; }
.viewbox.current::after { border: 1px solid #777; width: 7px; background: linear-gradient(#000, #000) center / 5px 2px no-repeat, linear-gradient(#fff, #ccc); }

/* docked panels */
.work { flex: 544 1 0; min-height: 0; display: flex; gap: 1px; padding: 1px 3px 0 4px; background: #f0f0f0; }
.side { flex: none; width: 235px; display: flex; flex-direction: column; gap: 2px; }
.panel { flex: 1 1 0; min-height: 0; display: flex; flex-direction: column; border: 1px solid #222; border-right: 2px solid #778; background: #fff; overflow: hidden; }
.phead { flex: none; height: 21px; display: flex; align-items: center; gap: 3px; padding: 0 4px 0 9px; background: #fff; border-bottom: 1px solid #d9dce4; }
.phead h2 { flex: 1; padding-left: 1px; white-space: nowrap; }
.pb { width: 14px; height: 13px; border: 1px solid #56729c; background: #dbe8f8; display: flex; align-items: center; justify-content: center; }
.pb::after { content: ""; width: 6px; height: 5px; border: 1px solid #3c5a8a; background: #fff; }
.pp svg { width: 12px; height: 12px; display: block; }
.px { width: 14px; height: 14px; border: 1px solid #6b1d16; background: linear-gradient(#e8a49c, #a83c34); color: #fff; font: bold 11px/10px "DejaVu Sans Condensed", sans-serif; }
.tree, .tree ul { list-style: none; margin: 0; padding: 0; }
.tree { flex: 1; border: 1px solid #6f7686; margin: 0 1px 2px; padding: 1px 0; line-height: 17px; }
.tree ul { padding-left: 19px; }
.tree li { position: relative; }
.tree ul li::before { content: ""; position: absolute; left: 8px; top: 0; width: 11px; height: 9px; border: 1px dotted #999; border-width: 0 0 1px 1px; }
.tree ul li:not(:last-child)::after { content: ""; position: absolute; left: 8px; top: 0; bottom: 0; border-left: 1px dotted #999; }
.node { display: flex; align-items: center; height: 17px; padding-left: 4px; position: relative; }
.tog { width: 16px; flex: none; display: flex; }
.node .lbl { flex: 1; min-width: 0; overflow: hidden; white-space: nowrap; margin-left: 2px; padding-left: 2px; border-right: 24px solid transparent; }
.node span:last-child { padding-right: 1px; }
.node .sel { background: #eee; background-clip: border-box; }
.minus { width: 9px; height: 9px; border: 1px solid #8a93a6; background: linear-gradient(#4b5a80, #4b5a80) center / 5px 1px no-repeat #fff; z-index: 1; display: inline-block; }
.filters { flex: 1; min-height: 0; display: flex; border: 1px solid #8c93a2; margin: 0 1px; background: #f0f0f0; overflow: hidden; }
.filters table { flex: 1; width: 100%; border-spacing: 0; table-layout: fixed; height: 209px; align-self: flex-start; }
.filters tr { height: 19px; }
.filters td, .filters th { height: 19px; padding: 0; border-bottom: 1px dotted #999; white-space: nowrap; overflow: hidden; }
.filters th { text-align: left; font-size: 12px; padding-left: 4px; }
.filters th .minus { margin-right: 5px; vertical-align: 0; }
.filters td:first-child { padding-left: 31px; border-right: 1px solid #aaa; }
.f-name { width: 92px; }
.f-btn { width: 18px; }
.dd { width: 15px; height: 13px; border: 1px solid #666; background: linear-gradient(#fff, #d4d4d4); display: inline-flex; align-items: flex-end; justify-content: center; flex: none; vertical-align: middle; }
.dd::after { content: ""; border: 4px solid transparent; border-top-color: #000; border-bottom: 0; margin-bottom: 1px; }
.filters .dd { width: 17px; height: 16px; }
.filters .dd::after { margin-bottom: 4px; border-width: 3px; border-top-width: 4px; border-bottom: 0; }

/* scroll bars */
.vbar { flex: none; width: 17px; display: flex; flex-direction: column; align-items: center; background: #f1f1f1; border-left: 1px solid #ddd; padding: 7px 0; }
.vbar .thumb { flex: none; width: 15px; height: 79%; margin: 6px 0 auto; border: 1px solid #a0a0a0; border-radius: 2px; background: repeating-linear-gradient(#666 0 1px, transparent 1px 3px) center / 7px 8px no-repeat, linear-gradient(90deg, #f6f6f6, #c8c8cc); }
.vbar .thumb.short { height: 73px; }
.up, .vbar .down { border: 3px solid transparent; border-bottom: 4px solid #555; border-top: 0; }
.vbar .down { border-bottom: 0; border-top: 4px solid #555; }
.hbar { flex: none; height: 17px; display: flex; align-items: center; gap: 8px; padding: 0 24px 0 6px; background: #f1f1f1; border-top: 1px solid #aaa; }
.hbar .thumb { flex: none; width: 88%; height: 15px; border: 1px solid #a0a0a0; border-radius: 2px; background: linear-gradient(#f6f6f6, #c8c8cc); }
.to-left, .to-right { border: 3px solid transparent; border-right: 4px solid #333; border-left: 0; }
.hbar .to-right { border-right: 0; border-left: 4px solid #333; margin-left: auto; }

/* task grid */
.grid { flex: 1; min-width: 0; display: flex; flex-direction: column; margin: 5px 0 1px; border: 1px solid #8c8c8c; border-left: 0; background: #f0f0f0; }
.gridmain { flex: 1; min-height: 0; display: flex; }
.gridbody { flex: 1; min-width: 0; overflow: hidden; font: 11px/14px Roboto, sans-serif; }
.groupby { height: 33px; padding: 8px 6px; background: #a0a0a0; }
.groupby span { display: inline-block; height: 18px; padding: 2px 4px 0 1px; background: linear-gradient(#fff, #eee); white-space: nowrap; }
em { font-style: normal; font-size: 10px; line-height: 10px; color: #888; margin-left: 4px; }
.tasks { width: 100%; table-layout: fixed; border-spacing: 0; }
.c0 { width: 14px; } .c1 { width: 320px; } .c2 { width: 34px; } .c3 { width: 83px; } .c4 { width: 53px; } .c5 { width: 88px; } .c6 { width: 61px; } .c7 { width: 63px; } .c8 { width: 122px; } .c9 { width: 146px; }
.tasks th, .notif th { height: 17px; padding: 1px 0 0; font-weight: normal; background: linear-gradient(#fff 50%, #f2f4f6); border-right: 1px solid #e2e4e8; white-space: nowrap; overflow: hidden; position: relative; }
.tasks th.m, .notif th.m { padding-right: 17px; }
th .dd { position: absolute; right: 2px; top: 3px; }
.tasks td { height: 20px; padding: 1px 1px 0 2px; background: #fff; border: 0 solid #9c9c9c; border-width: 0 1px 1px 0; white-space: nowrap; overflow: hidden; }
.tasks td:first-child { background: #f0f0f0; border-bottom: 0; }
.tasks td:nth-child(3) { text-align: right; }
.tasks td:nth-child(5), .tasks td:nth-child(9), .tasks td:nth-child(10) { text-align: center; }
.tasks td:nth-child(8) { text-align: center; padding: 1px 0 0; }
.tasks td:nth-child(5) { padding: 2px 1px 1px; }
.tasks td:last-child { border-right: 0; padding: 0 0 0 1px; }
.tasks td .i16 { display: inline-block; vertical-align: middle; margin: 0 3px 2px 1px; }
.tasks tr.g td { height: 18px; padding: 2px 0 0 1px; background: #f0f0f0; border-bottom: 1px solid #9c9c9c; }
.tasks tr.f td { height: 23px; background: #f0f0f0; }
.tasks tr.f td:first-child { border-bottom: 1px solid #b0b0b0; }
.tasks tr.cur td { background: #f0f0f0; }
.tasks tr.part td { height: 5px; padding: 0; border-bottom-color: #777; }
.bar { display: block; height: 15px; line-height: 17px; background: linear-gradient(#c0f6c0, #7ee88a 35%, #00d020 38%, #00d42a); color: #75687a; text-align: center; }
.low { height: 15px; line-height: 17px; background: linear-gradient(#c0f6c0, #7ee88a 35%, #00d020 38%, #00d42a) 0 0 / 13px 100% no-repeat; }

/* lower dock */
.dock { flex: 348 1 0; min-height: 0; margin-top: 4px; display: flex; gap: 5px; padding: 0 4px 0 2px; background: #f0f0f0; border-bottom: 1px solid #111; }
.pane { display: flex; flex-direction: column; min-width: 0; border: 1px solid #222; border-bottom: 0; background: #fff; }
.notes-pane { flex: 645 1 0; }
.info-pane { flex: 624 1 0; }
.pane .phead { height: 23px; padding: 1px 5px 0 2px; }
.pane .toolbar { height: 38px; padding-left: 2px; }
.pane .toolbar .grip { margin-right: 3px; }
.pane .toolbar.endtools { justify-content: flex-end; padding-right: 2px; gap: 8px; }
.fontbtn { width: 20px; height: 19px; font: 18px/19px "Liberation Serif", serif; color: #444; padding-left: 2px; background: linear-gradient(135deg, transparent 78%, #4a9ae0 79%), #faf4c4; }
.chev { font: bold 14px/14px "Liberation Sans", sans-serif; display: flex; flex-direction: column; align-items: center; gap: 8px; }
.graybar { flex: none; height: 16px; margin-right: 2px; background: #a0a0a0; font-weight: bold; }
.pane-body { flex: 1; min-height: 0; border-top: 1px solid #999; overflow: hidden; }
.paper { padding: 4px 0 0 1px; border: 1px solid #999; margin-top: 1px; }
.notif { width: 100%; table-layout: fixed; border-spacing: 0; font-weight: bold; font-size: 12px; }
.notif th { font-size: 11px; }
.n1 { width: 230px; } .n2 { width: 108px; } .n3 { width: 125px; }
.notif td { height: 19px; padding: 0 0 0 2px; border: 0 solid #9c9c9c; border-width: 0 1px 1px 0; white-space: nowrap; overflow: hidden; }
.notif .shade td { background: #f0f0f0; }
.notif .memo td { height: auto; padding: 3px 0 1px 20px; }
.notif .blue td { color: #0000c8; }
.btabs { flex: none; display: flex; height: 26px; padding-left: 3px; border-top: 1px solid #999; background: #fff; }
.btabs button { height: 22px; padding: 0 5px 0 3px; display: flex; align-items: center; gap: 3px; border: 1px solid #888; border-width: 0 2px 1px 1px; background: #f0f0f0; white-space: nowrap; }
.btabs .on { background: #fff; }
.info-pane .btabs { padding-left: 1px; }
.info-pane .btabs button { padding: 0 3px 0 2px; }

.statusbar { flex: none; height: 20px; display: flex; align-items: center; background: #f0eeee; border-bottom: 2px solid #3c5f9c; }
.cell { height: 18px; border-right: 1px solid #ccc; }
.disk { width: 22px; padding: 5px 4px; }
.disk i { display: block; height: 7px; border: 1px solid #666; background: #bbb; }
.gap { width: 211px; }
.gap2 { width: 66px; }
.prog { width: 102px; height: 15px; line-height: 15px; text-align: center; border: 1px solid #aaa; background: linear-gradient(#eee, #bbb); }

/* edit dialog window */
.dialog { position: absolute; left: 659px; top: 473px; width: 573px; padding: 0 7px 7px; border: 1px solid #16243c; border-radius: 7px; background: linear-gradient(90deg, #9db9dc 0, #7fa3d4 18%, #4679bf 30%, #4a7fc8 60%, #86abe0 90%, #9cbce4) 0 0 / 100% 30px no-repeat, linear-gradient(#9db9dc 50px, #b4c8e4 140px, #3f6eb4 141px, #4a7cc8); box-shadow: inset 0 0 0 1px rgba(255,255,255,.5), 2px 3px 14px rgba(0,0,0,.75); }
.dialog > header { height: 29px; display: flex; justify-content: space-between; align-items: flex-start; }
.dialog > header h2 { font: 12px/28px Roboto, sans-serif; }
.dlg-x { width: 47px; height: 19px; border: 1px solid #5a2420; border-top: 0; border-radius: 0 0 4px 4px; background: linear-gradient(#dca098, #c2544a 45%, #a82418 50%, #d05a44); }
.dlg-x svg { width: 14px; height: 12px; }
.client { border: 1px solid #2c4470; background: #f0f0f0; padding-top: 2px; }
.dtabs { display: flex; padding-left: 1px; }
.dtabs button { height: 19px; display: flex; align-items: center; justify-content: center; gap: 7px; border: 1px solid #8c8c8c; border-width: 1px 2px 0 1px; background: linear-gradient(#f3f3f3, #d9d9d9); line-height: 18px; }
.w1 { flex: 139; } .w2 { flex: 141; } .w3 { flex: 109; } .w4 { flex: 164; }
.v1 { flex: 105; } .v2 { flex: 112; } .v3 { flex: 121; } .v4 { flex: 133; } .v5 { flex: 82; }
.dtabs.back { padding-right: 2px; }
.dtabs.front { padding: 0 2px 0 0; }
.dtabs .on { background: #fff; height: 23px; margin: -4px 0 -2px; border-left: 0; border-right-width: 1px; }
.page { height: 381px; margin: 0 2px 0 0; padding: 12px 10px 0 13px; border: 1px solid #8c8c8c; border-width: 1px 1px 1px 0; background: #f0f0f0; box-shadow: inset 3px 3px #fff, inset -3px -3px #fff; display: flex; flex-direction: column; gap: 13px; }
.line { display: flex; align-items: center; height: 21px; }
.name label { width: 36px; }
.page input[type=text] { flex: 1; min-width: 0; width: 100%; height: 21px; border: 1px solid #e2e3ea; border-top-color: #abadb3; background: #fff; padding: 0 2px; }
.boxes { display: flex; justify-content: space-between; }
.box { border: 1px solid #a0a0a0; padding: 10px 10px 11px 11px; }
.two { display: grid; grid-template-columns: 62px 1fr; grid-auto-rows: 21px; row-gap: 6px; align-items: center; }
.prio { width: 246px; }
.times { width: 184px; grid-template-columns: 77px 1fr; }
.flowbox { display: grid; grid-template-columns: 48px 121px 62px 57px; column-gap: 5px; grid-auto-rows: 21px; row-gap: 6px; align-items: center; }
.flowbox label { text-align: right; justify-self: end; }
.combo, .spin { position: relative; height: 21px; display: flex; }
.combo select { appearance: none; width: 100%; height: 21px; border: 1px solid #e2e3ea; border-top-color: #abadb3; background: #fff; padding: 0 16px 0 3px; border-radius: 0; opacity: 1; }
.combo::after { content: ""; position: absolute; right: 4px; top: 9px; border: 4px solid transparent; border-top: 4px solid #000; border-bottom: 0; }
.combo.raised select { border: 1px solid #707070; border-radius: 3px; background: linear-gradient(#f2f2f2, #ebebeb 48%, #dcdcdc 52%, #cfcfcf); }
.combo.icon select { padding-left: 22px; }
.combo.icon .i16 { position: absolute; left: 4px; top: 2px; }
.combo.focus::before { content: ""; position: absolute; left: 22px; right: 18px; top: 3px; bottom: 3px; border: 1px dotted #000; }
.combo.off select, .spin.off input { color: #a0a0a0; border-color: #b0b0b0 !important; }
.combo.off::after { border-top-color: #aaa; }
.spin i { position: absolute; right: 1px; top: 1px; bottom: 1px; width: 15px; display: flex; flex-direction: column; gap: 1px; }
.spin b { flex: 1; border: 1px solid #b9bec8; background: linear-gradient(#fff, #e4e4ea); display: flex; align-items: center; justify-content: center; }
.spin b::after { content: ""; border: 3px solid transparent; }
.spin .su::after { border-bottom-color: #5060a8; border-top: 0; }
.spin .sd::after { border-top-color: #5060a8; border-bottom: 0; }
.spin.off b::after { filter: grayscale(1); opacity: .6; }
.dates { height: 129px; display: flex; flex-direction: column; gap: 6px; }
.dates .combo { width: 121px; }
.dates .spin { width: 65px; margin-left: 6px; }
.dates input[type=checkbox] { width: 13px; height: 13px; margin: 0 3px 0 4px; flex: none; appearance: none; border: 1px solid #8e8f8f; background: linear-gradient(135deg, #d5d8dc, #fff); }
.dates input[type=checkbox]:checked::after { content: "✓"; display: block; font: bold 12px/11px "DejaVu Sans", sans-serif; color: #33439c; }
.dates input[type=checkbox].adc { margin: 0 2px 0 10px; background: #fff; border-color: #bbb; }
.dd-l { width: 93px; }
.dim { color: #a0a0a0; }
.tl { width: 72px; padding-left: 15px; white-space: nowrap; }
.push { width: 118px; height: 23px; margin-left: 7px; display: flex; align-items: center; justify-content: center; gap: 5px; border: 1px solid #707070; border-radius: 3px; background: linear-gradient(#f3f3f3, #ebebeb 48%, #dddddd 50%, #cfcfcf); box-shadow: inset 0 0 0 1px rgba(255,255,255,.7); }
.rec { margin-left: 22px; }
.actions { display: flex; justify-content: flex-end; gap: 8px; height: 47px; padding: 11px 3px 0 0; }
.actions .push { width: 98px; height: 24px; margin: 0; }
.push.ok { border-color: #3c7fb1; background: linear-gradient(#eaf6fd, #d9f0fc 48%, #bee6fd 50%, #a7d9f5); }

.marks { position: absolute; left: 0; top: 0; width: 1280px; height: 1024px; pointer-events: none; }
```
